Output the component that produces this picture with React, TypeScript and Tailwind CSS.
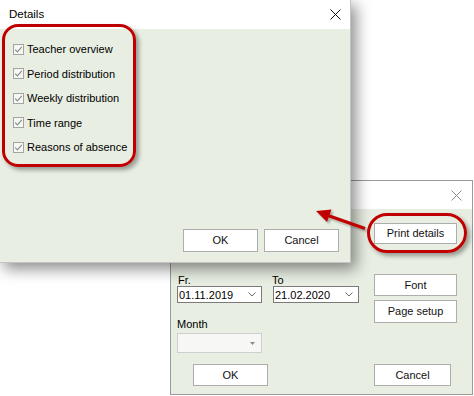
import React from "react";

const font = "font-['Liberation_Sans',Arial,sans-serif]";

const CloseX = ({ color }: { color: string }) => (
  <svg width="11" height="11" viewBox="0 0 11 11" className="block">
    <path d="M0.5 0.5 L10.5 10.5 M10.5 0.5 L0.5 10.5" stroke={color} strokeWidth="1" fill="none" />
  </svg>
);

const CheckBox = () => (
  <span className="w-[11px] h-[11px] border border-[#a3a3a3] bg-[#f6f8f4] flex items-center justify-center shrink-0">
    <svg width="9" height="9" viewBox="0 0 9 9" className="block">
      <path d="M1.2 4.6 L3.4 6.8 L7.8 1.8" stroke="#8c8c8c" strokeWidth="1.2" fill="none" />
    </svg>
  </span>
);

const Btn = ({ label, className = "" }: { label: string; className?: string }) => (
  <div
    className={`flex items-center justify-center border border-[#adadad] bg-white text-[11px] text-[#111] ${className}`}
  >
    {label}
  </div>
);

const DateBox = ({ value, w }: { value: string; w: string }) => (
  <div className={`${w} h-[17px] border border-[#7a7a7a] bg-white flex items-center justify-between pl-[1px] pr-[5px] text-[11px] leading-[12px]`}>
    <span>{value}</span>
    <svg width="8" height="5" viewBox="0 0 8 5" className="block">
      <path d="M0.5 0.5 L4 4 L7.5 0.5" stroke="#6b6b6b" strokeWidth="1" fill="none" />
    </svg>
  </div>
);

const items = [
  "Teacher overview",
  "Period distribution",
  "Weekly distribution",
  "Time range",
  "Reasons of absence",
];

export default function App() {
  return (
    <div className={`relative w-[474px] h-[396px] bg-white overflow-hidden text-black ${font}`}>
      {/* back window: print dialog */}
      <div className="absolute left-[170px] top-[180px] w-[303px] h-[215px] border border-[#9a9a9a] bg-white flex flex-col">
        <div className="h-[28px] flex items-center justify-end pr-[10px]">
          <CloseX color="#8a8a8a" />
        </div>
        <div className="flex-1 bg-[#e8eee2] flex pl-[6px]">
          <div className="w-[181px] flex flex-col pt-[65px]">
            <div className="flex gap-[11px]">
              <div className="flex flex-col">
                <span className="text-[11px] leading-[12px] h-[12px] pl-[1px]">Fr.</span>
                <DateBox value="01.11.2019" w="w-[85px]" />
              </div>
              <div className="flex flex-col">
                <span className="text-[11px] leading-[12px] h-[12px] -ml-[1px]">To</span>
                <DateBox value="21.02.2020" w="w-[86px]" />
              </div>
            </div>
            <span className="text-[11px] leading-[12px] h-[12px] mt-[15px]">Month</span>
            <div className="mt-[3px] w-[85px] h-[20px] border border-[#cfcfcf] bg-[#f7f8f6] flex items-center justify-end pr-[6px]">
              <svg width="5" height="3" viewBox="0 0 5 3" className="block">
                <path d="M0 0 L5 0 L2.5 3 Z" fill="#8a8a8a" />
              </svg>
            </div>
            <Btn label="OK" className="mt-[11px] ml-[16px] w-[75px] h-[22px]" />
          </div>
          <div className="ml-[16px] w-[83px] flex flex-col pt-[14px]">
            <Btn label="Print details" className="h-[21px]" />
            <Btn label="Font" className="mt-[30px] h-[22px]" />
            <Btn label="Page setup" className="mt-[4px] h-[23px]" />
            <Btn label="Cancel" className="mt-[41px] w-[77px] h-[22px]" />
          </div>
        </div>
      </div>

      {/* front window: Details */}
      <div className="absolute -left-[1px] -top-[1px] w-[352px] h-[264px] border border-[#c4c4c4] bg-white flex flex-col shadow-[5px_6px_14px_rgba(0,0,0,0.45)]">
        <div className="h-[29px] flex items-center justify-between pl-[9px] pr-[9px]">
          <span className="text-[11.5px]">Details</span>
          <CloseX color="#111" />
        </div>
        <div className="flex-1 bg-[#e8eee2] flex flex-col pt-[8px] pb-[10px] pr-[11px]">
          <div className="flex flex-col pl-[13px]">
            {items.map((t) => (
              <div key={t} className="h-[24.5px] flex items-center gap-[3px]">
                <CheckBox />
                <span className="text-[11px] leading-[12px]">{t}</span>
              </div>
            ))}
          </div>
          <div className="mt-auto flex justify-end gap-[6px]">
            <Btn label="OK" className="w-[75px] h-[23px] border-[#a8a8a8]" />
            <Btn label="Cancel" className="w-[75px] h-[23px] bg-[#c6ddb1] border-[#a3a89c]" />
          </div>
        </div>
      </div>

      {/* annotations */}
      <div className="absolute left-[2px] top-[24px] w-[134px] h-[143px] rounded-[16px] border-[3px] border-[#c00000] shadow-[3px_3px_4px_rgba(0,0,0,0.35)]" />
      <div className="absolute left-[367px] top-[213px] w-[100px] h-[40px] rounded-[20px] border-[3px] border-[#c00000] shadow-[3px_3px_4px_rgba(0,0,0,0.35)]" />
      <svg className="absolute left-0 top-0 pointer-events-none" width="474" height="396">
        <defs>
          <filter id="sh" x="-20%" y="-20%" width="140%" height="140%">
            <feDropShadow dx="2" dy="2" stdDeviation="1.2" floodColor="#000" floodOpacity="0.3" />
          </filter>
        </defs>
        <g filter="url(#sh)">
          <line x1="365" y1="228.5" x2="328" y2="215.5" stroke="#c00000" strokeWidth="3" />
          <polygon points="316,211 331.5,209.5 327,222" fill="#c00000" />
        </g>
      </svg>
    </div>
  );
}
